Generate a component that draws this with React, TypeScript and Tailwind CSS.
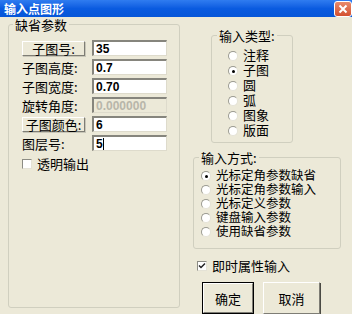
import React from 'react';

const cjk = "font-['Noto_Sans_CJK_SC',sans-serif]";
// Liberation Sans first keeps the inline box short; CJK glyphs fall back to Noto
const tight = "font-['Liberation_Sans','Noto_Sans_CJK_SC',sans-serif]";

const Radio: React.FC<{ checked?: boolean; label: string; h: string; size: string }> = ({ checked, label, h, size }) => (
  <div className={`flex items-center ${h}`}>
    <span className="relative w-[10px] h-[10px] rounded-full bg-white border border-t-[#9a9a90] border-l-[#9a9a90] border-r-[#e4e2d6] border-b-[#e4e2d6] shrink-0">
      {checked && <span className="absolute left-[3px] top-[3px] w-[3px] h-[3px] rounded-full bg-black" />}
    </span>
    <span className={`ml-[5px] leading-none text-black ${tight} ${size}`}>{label}</span>
  </div>
);

const Check: React.FC<{ checked?: boolean; label: string }> = ({ checked, label }) => (
  <div className="flex items-center h-[15px]">
    <span className="relative w-[10px] h-[10px] bg-white border border-t-[#8c8c84] border-l-[#8c8c84] border-r-[#e4e2d6] border-b-[#e4e2d6] shrink-0">
      {checked && (
        <svg className="absolute left-0 top-0" width="8" height="8" viewBox="0 0 8 8">
          <path d="M1 3.5 L3 5.5 L7 1.5" stroke="#222" strokeWidth="1.5" fill="none" />
        </svg>
      )}
    </span>
    <span className="ml-[5px] text-[13px] leading-none text-black">{label}</span>
  </div>
);

const Field: React.FC<{ value: string; disabled?: boolean; caret?: boolean }> = ({ value, disabled, caret }) => (
  <div
    className={`w-[75px] h-[16px] flex items-center pl-[2px] border-t-2 border-l-2 border-t-[#86857d] border-l-[#86857d] border-r border-b border-r-[#dedbcc] border-b-[#dedbcc] font-['Liberation_Sans',sans-serif] font-bold text-[12px] ${
      disabled ? 'bg-[#ece9d8] text-[#b8b6aa]' : 'bg-white text-black'
    }`}
  >
    {value}
    {caret && <span className="w-px h-[12px] bg-black" />}
  </div>
);

const RaisedButton: React.FC<{ label: string }> = ({ label }) => (
  <div className="w-[63px] h-[15px] flex items-center justify-center bg-[#ece9d8] border border-t-white border-l-white border-r-[#7e7d75] border-b-[#7e7d75] shadow-[1px_1px_0_#c8c6b8] text-[13px] leading-none">
    {label}
  </div>
);

const Label: React.FC<{ label: string }> = ({ label }) => (
  <div className="w-[63px] h-[15px] flex items-center text-[13px] leading-none">{label}</div>
);

export default function App() {
  return (
    <div className={`w-[352px] h-[314px] overflow-hidden bg-[#ece9d8] text-black ${cjk}`}>
      {/* title bar */}
      <div className="h-[17px] flex items-center justify-between bg-gradient-to-b from-[#2f7cf0] via-[#0a5be0] to-[#0656d8]">
        <span className="ml-[4px] text-[12px] font-bold text-white leading-none">输入点图形</span>
        <div className="w-[18px] h-[16px] rounded-[3px] border border-white bg-gradient-to-b from-[#e88a6c] to-[#d3502f] flex items-center justify-center">
          <svg width="10" height="10" viewBox="0 0 10 10">
            <path d="M1.5 1.5 L8.5 8.5 M8.5 1.5 L1.5 8.5" stroke="white" strokeWidth="2" />
          </svg>
        </div>
      </div>

      <div className="flex">
        {/* left group */}
        <fieldset className="ml-[8px] w-[172px] h-[291px] border border-[#d0cfbf] rounded-[3px]">
          <legend className="ml-[4px] px-[2px] text-[13px] leading-[15px]">缺省参数</legend>
          <div className="pl-[13px] pt-[8px] flex flex-col gap-[3px]">
            <div className="flex items-center gap-[7px]">
              <RaisedButton label="子图号:" />
              <Field value="35" />
            </div>
            <div className="flex items-center gap-[7px]">
              <Label label="子图高度:" />
              <Field value="0.7" />
            </div>
            <div className="flex items-center gap-[7px]">
              <Label label="子图宽度:" />
              <Field value="0.70" />
            </div>
            <div className="flex items-center gap-[7px]">
              <Label label="旋转角度:" />
              <Field value="0.000000" disabled />
            </div>
            <div className="flex items-center gap-[7px]">
              <RaisedButton label="子图颜色:" />
              <Field value="6" />
            </div>
            <div className="flex items-center gap-[7px]">
              <Label label="图层号:" />
              <Field value="5" caret />
            </div>
            <div className="mt-[2px]">
              <Check label="透明输出" />
            </div>
          </div>
        </fieldset>

        {/* right column */}
        <div className="ml-[13px] flex flex-col">
          <fieldset className="ml-[18px] mt-[11px] w-[82px] h-[115px] border border-[#d0cfbf] rounded-[3px]">
            <legend className="ml-[5px] px-[2px] text-[13px] leading-[15px]">输入类型:</legend>
            <div className="pl-[16px] pt-[5px] flex flex-col">
              <Radio label="注释" h="h-[15px]" size="text-[13px]" />
              <Radio label="子图" checked h="h-[15px]" size="text-[13px]" />
              <Radio label="圆" h="h-[15px]" size="text-[13px]" />
              <Radio label="弧" h="h-[15px]" size="text-[13px]" />
              <Radio label="图象" h="h-[15px]" size="text-[13px]" />
              <Radio label="版面" h="h-[15px]" size="text-[13px]" />
            </div>
          </fieldset>

          <fieldset className="mt-[7px] w-[148px] h-[99px] border border-[#d0cfbf] rounded-[3px]">
            <legend className="ml-[5px] px-[2px] text-[13px] leading-[15px]">输入方式:</legend>
            <div className="pl-[7px] pt-[4px] flex flex-col">
              <Radio label="光标定角参数缺省" checked h="h-[14px]" size="text-[12.5px]" />
              <Radio label="光标定角参数输入" h="h-[14px]" size="text-[12.5px]" />
              <Radio label="光标定义参数" h="h-[14px]" size="text-[12.5px]" />
              <Radio label="键盘输入参数" h="h-[14px]" size="text-[12.5px]" />
              <Radio label="使用缺省参数" h="h-[14px]" size="text-[12.5px]" />
            </div>
          </fieldset>

          <div className="ml-[4px] mt-[9px]">
            <Check checked label="即时属性输入" />
          </div>

          <div className="ml-[9px] mt-[9px] flex gap-[9px]">
            <div className="w-[52px] h-[32px] border border-black bg-[#ece9d8] flex">
              <div className="flex-1 flex items-center justify-center border border-t-white border-l-white border-r-[#7e7d75] border-b-[#7e7d75] text-[13px] leading-none">
                确定
              </div>
            </div>
            <div className="w-[57px] h-[32px] bg-[#ece9d8] border border-t-white border-l-white border-r-[#7e7d75] border-b-[#7e7d75] shadow-[1px_1px_0_#4a4a44] flex items-center justify-center text-[13px] leading-none">
              取消
            </div>
          </div>
        </div>
      </div>
    </div>
  );
}
